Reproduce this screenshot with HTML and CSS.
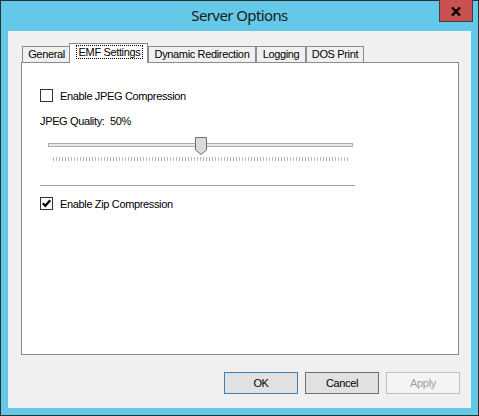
FILE: index.html
```html
<!DOCTYPE html>
<html>
<head>
<meta charset="utf-8">
<link rel="stylesheet" href="styles.css">
</head>
<body>
<div class="window">
  <div class="titlebar">
    <span class="title">Server Options</span>
    <div class="close">
      <svg width="10" height="9" viewBox="0 0 10 9"><path d="M1 0.5 L9 8.5 M9 0.5 L1 8.5" stroke="#000" stroke-width="2.4" fill="none"/></svg>
    </div>
  </div>
  <div class="client">
    <div class="tabs">
      <div class="tab t-general">General</div>
      <div class="tab active t-emf"><span class="focus">EMF Settings</span></div>
      <div class="tab t-dyn">Dynamic Redirection</div>
      <div class="tab t-log">Logging</div>
      <div class="tab t-dos">DOS Print</div>
    </div>
    <div class="panel">
      <div class="check">
        <span class="box"></span>
        <span class="lbl">Enable JPEG Compression</span>
      </div>
      <div class="quality">JPEG Quality:&nbsp; 50%</div>
      <div class="slider">
        <div class="track"></div>
        <svg class="thumb" width="12" height="18" viewBox="0 0 12 18"><path d="M0.5 0.5 H11.5 V13 L6 17.5 L0.5 13 Z" fill="#DADADA" stroke="#6E6E6E" stroke-width="1"/></svg>
        <div class="ticks"></div>
      </div>
      <div class="sep"></div>
      <div class="check">
        <span class="box">
          <svg width="11" height="11" viewBox="0 0 11 11"><path d="M1.8 5.3 L4.3 7.8 L9.2 2.3" stroke="#000" stroke-width="2.2" fill="none"/></svg>
        </span>
        <span class="lbl">Enable Zip Compression</span>
      </div>
    </div>
    <div class="buttons">
      <div class="btn default">OK</div>
      <div class="btn">Cancel</div>
      <div class="btn disabled">Apply</div>
    </div>
  </div>
</div>
</body>
</html>
```
FILE: styles.css
```css
* { box-sizing: border-box; }
html, body { margin: 0; padding: 0; }
body {
  width: 479px;
  height: 416px;
  overflow: hidden;
  font-family: "Liberation Sans", Arial, sans-serif;
  font-size: 11px;
  letter-spacing: -0.35px;
  color: #000;
}
.window {
  width: 479px;
  height: 416px;
  background: #64C8E8;
  border: 1px solid #2F2F2F;
  position: relative;
}
.titlebar {
  height: 30px;
  display: flex;
  align-items: flex-start;
  justify-content: center;
}
.title {
  font-family: "Noto Sans", "Open Sans", sans-serif;
  font-size: 15px;
  letter-spacing: -0.6px;
  line-height: 20px;
  margin-top: 4px;
  color: #1A1A1A;
}
.close {
  position: absolute;
  top: -1px;
  right: 5px;
  width: 34px;
  height: 22px;
  background: #C75050;
  border: 1px solid #3F3F3F;
  border-top: none;
  display: flex;
  align-items: center;
  justify-content: center;
}
.close svg { margin-top: 1px; }
.client {
  margin: 0 7px;
  height: 377px;
  background: #F0F0F0;
  padding: 12px 12px 0 13px;
}
.tabs {
  display: flex;
  align-items: flex-end;
  height: 20px;
  margin-bottom: -1px;
  padding-left: 1px;
}
.tab {
  height: 17px;
  border: 1px solid #898C95;
  border-bottom: none;
  background: #F0F0F0;
  text-align: center;
  line-height: 13px;
  padding-top: 1px;
  white-space: nowrap;
}
.t-general { width: 49px; }
.t-emf { width: 79px; margin-left: -2px; }
.t-dyn { width: 108px; }
.t-log { width: 50px; }
.t-dos { width: 58px; }
.tab.active {
  height: 20px;
  background: #FFFFFF;
  position: relative;
  z-index: 2;
  padding-top: 1px;
}
.focus {
  display: inline-block;
  border: 1px dotted #000;
  line-height: 12px;
  padding: 0 2px;
  margin-left: 2px;
}
.panel {
  position: relative;
  z-index: 1;
  height: 293px;
  background: #FFFFFF;
  border: 1px solid #898C95;
  padding: 26px 0 0 18px;
}
.check {
  display: flex;
  align-items: flex-start;
  height: 13px;
}
.box {
  width: 13px;
  height: 13px;
  border: 1px solid #333;
  background: #FFF;
  display: flex;
  align-items: center;
  justify-content: center;
}
.lbl {
  margin-left: 7px;
  line-height: 13px;
  margin-top: 1px;
  white-space: nowrap;
}
.quality {
  margin-top: 13px;
  line-height: 13px;
}
.slider {
  position: relative;
  margin-top: 9px;
  height: 24px;
}
.track {
  position: relative;
  top: 6px;
  margin-left: 8px;
  width: 305px;
  height: 4px;
  border: 1px solid #ADADAD;
  background: #E7EAEA;
}
.thumb {
  position: absolute;
  left: 155px;
  top: 0;
}
.ticks {
  margin-top: 10px;
  margin-left: 13px;
  width: 296px;
  height: 4px;
  position: relative;
  top: 6px;
  background: repeating-linear-gradient(to right, #B8B8B8 0 1px, transparent 1px 3px);
}
.sep {
  margin-top: 24px;
  width: 315px;
  height: 1px;
  background: #A0A0A0;
}
.sep + .check { margin-top: 11px; }
.buttons {
  display: flex;
  justify-content: flex-end;
  gap: 7px;
  margin-top: 17px;
  margin-right: -1px;
}
.btn {
  width: 74px;
  height: 22px;
  border: 1px solid #707070;
  background: #E1E1E1;
  text-align: center;
  line-height: 20px;
}
.btn.default { border-color: #3C7FB1; }
.btn.disabled {
  border-color: #BFBFBF;
  background: #F4F4F4;
  color: #A0A0A0;
}
```
